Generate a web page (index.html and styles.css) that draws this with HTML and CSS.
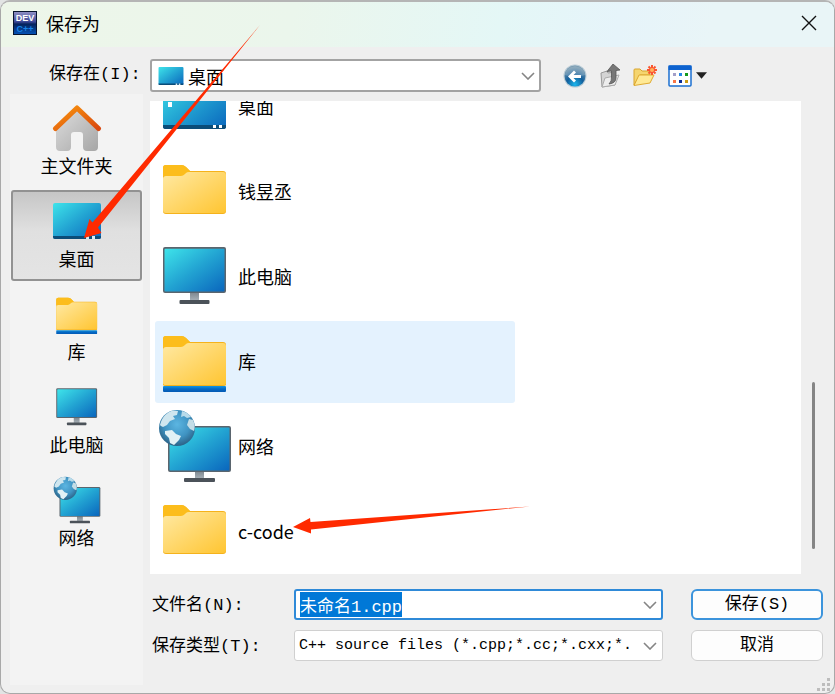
FILE: index.html
```html
<!DOCTYPE html>
<html lang="zh-CN">
<head>
  <meta charset="UTF-8">
  <meta name="viewport" content="width=device-width, initial-scale=1.0">
  <title>保存为</title>
  <link rel="stylesheet" href="styles.css">
</head>
<body>
  <!-- Shared icons -->
  <svg class="defs" aria-hidden="true">
    <defs>
      <linearGradient id="screen" x1="0" y1="0" x2="1" y2="1">
        <stop offset="0" stop-color="#3ee4ea"/>
        <stop offset="0.5" stop-color="#22a3d2"/>
        <stop offset="1" stop-color="#0a66bd"/>
      </linearGradient>
      <linearGradient id="paper" x1="0" y1="0" x2="1" y2="1">
        <stop offset="0" stop-color="#ffe9a3"/>
        <stop offset="1" stop-color="#ffc531"/>
      </linearGradient>
      <linearGradient id="base" x1="0" y1="0" x2="0" y2="1">
        <stop offset="0" stop-color="#1496e0"/>
        <stop offset="0.5" stop-color="#0568c4"/>
        <stop offset="1" stop-color="#035ab4"/>
      </linearGradient>
      <linearGradient id="stand" x1="0" y1="0" x2="0" y2="1">
        <stop offset="0" stop-color="#7c868e"/>
        <stop offset="1" stop-color="#a9b2b9"/>
      </linearGradient>
      <linearGradient id="wall" x1="0" y1="0" x2="1" y2="1">
        <stop offset="0" stop-color="#dedede"/>
        <stop offset="1" stop-color="#a6a6a6"/>
      </linearGradient>
      <linearGradient id="roof" x1="0" y1="0" x2="1" y2="1">
        <stop offset="0" stop-color="#f9950d"/>
        <stop offset="1" stop-color="#d9480f"/>
      </linearGradient>
      <radialGradient id="ocean" cx="0.5" cy="0.4" r="0.6">
        <stop offset="0" stop-color="#5cb6e2"/>
        <stop offset="0.6" stop-color="#3f93c2"/>
        <stop offset="1" stop-color="#2c6286"/>
      </radialGradient>
      <radialGradient id="ball" cx="0.5" cy="0.9" r="0.8">
        <stop offset="0" stop-color="#1ab6ee"/>
        <stop offset="0.5" stop-color="#135f9c"/>
        <stop offset="1" stop-color="#6f94ac"/>
      </radialGradient>
      <linearGradient id="dev" x1="0" y1="0" x2="0" y2="1">
        <stop offset="0" stop-color="#8e8fc4"/>
        <stop offset="0.45" stop-color="#3b4795"/>
        <stop offset="0.55" stop-color="#04235c"/>
        <stop offset="1" stop-color="#0551b4"/>
      </linearGradient>
    </defs>
    <symbol id="i-folder" viewBox="0 0 74 74">
      <path d="M5 14q0-3 3-3h15q3 0 5 2l4 4H65q3 0 3 3V57q0 3-3 3H8q-3 0-3-3z" fill="#f5b21b"/>
      <path d="M5 14q0-3 3-3h15q3 0 5 2l4 4-4 5H5z" fill="#fcbd1c"/>
      <path d="M5 25q0-3 3-3h15q2 0 4-2l1-1q1-1 3-1H65q3 0 3 3V56q0 3-3 3H8q-3 0-3-3z" fill="url(#paper)"/>
    </symbol>
    <symbol id="i-library" viewBox="0 0 74 74">
      <path d="M5 15q0-3 3-3h15q3 0 5 2l4 4H65q3 0 3 3V61q0 1-3 1H8q-3 0-3-1z" fill="#f5b21b"/>
      <path d="M5 15q0-3 3-3h15q3 0 5 2l4 4-4 5H5z" fill="#fcbd1c"/>
      <path d="M5 26q0-3 3-3h15q2 0 4-2l1-1q1-1 3-1H65q3 0 3 3V59q0 2-3 2H8q-3 0-3-2z" fill="url(#paper)"/>
      <rect x="5" y="62" width="63" height="6" rx="1" fill="url(#base)"/>
    </symbol>
    <symbol id="i-pc" viewBox="0 0 74 74">
      <path d="M32 53h9v9h-9z" fill="url(#stand)"/>
      <rect x="21.500" y="61" width="30" height="4" rx="1" fill="#4b5259"/>
      <rect x="5" y="8" width="63" height="46" rx="2" fill="#5a656e"/>
      <rect x="6.500" y="9.800" width="60" height="42.700" rx="1" fill="url(#screen)"/>
    </symbol>
    <symbol id="i-network" viewBox="0 0 74 74">
      <path d="M37 62h9v8h-9z" fill="url(#stand)"/>
      <rect x="26" y="69" width="31" height="4" rx="1" fill="#4b5259"/>
      <rect x="10" y="17" width="63" height="46" rx="2" fill="#5a656e"/>
      <rect x="11.500" y="18.500" width="60" height="43" rx="1" fill="url(#screen)"/>
      <circle cx="19" cy="19" r="18" fill="url(#ocean)"/>
      <path d="M2 16C4 8 9 3 15 1.500l5 .500-1 4-4 1 2 3-5 2-3 4-4 2-2-1z" fill="#cfe6ef"/>
      <path d="M24 2c4 1 7 3 9 6l-4 1-3-2-3 1z" fill="#b8dbea"/>
      <path d="M31 10l4 1c2 4 2 8 1 11l-4-2-3-4z" fill="#c4dde6"/>
      <path d="M7 22l7-1 4 4 5 2-2 4-5 5-4-2-1-5-4-4z" fill="#e2f1f5"/>
    </symbol>
    <symbol id="i-desktop" viewBox="0 0 74 74">
      <rect x="5" y="8" width="63" height="52" rx="3" fill="url(#screen)"/>
      <path d="M5 56h63v2q0 2-3 2H8q-3 0-3-2z" fill="#0b4c78"/>
      <path d="M10 33h4v5h-4zM55 56h3v3h-3zM61 56h3v3h-3z" fill="#fff"/>
    </symbol>
    <symbol id="i-desktop-flat" viewBox="0 0 50 36">
      <rect x="1" y="0" width="48" height="36" rx="2" fill="url(#screen)"/>
      <path d="M1 33h48v1q0 2-2 2H3q-2 0-2-2z" fill="#0b4c78"/>
      <path d="M34 33h3v3h-3zM40 33h3v3h-3z" fill="#d9edf7"/>
    </symbol>
    <symbol id="i-home" viewBox="0 0 48 48">
      <path d="M24 5L3 25v18q0 4 4 4h7q4 0 4-4V31q0-3 3-3h6q3 0 3 3v12q0 4 4 4h7q4 0 4-4V25z" fill="url(#wall)"/>
      <path d="M2.500 24.500L24 4l21.500 20.500" fill="none" stroke="url(#roof)" stroke-width="5" stroke-linecap="round" stroke-linejoin="round"/>
    </symbol>
    <symbol id="i-chevron" viewBox="0 0 14 8">
      <path d="M1 1l6 6 6-6" fill="none" stroke="#858585" stroke-width="1.600"/>
    </symbol>
  </svg>

  <div class="dialog" role="dialog" aria-labelledby="title">
    <header class="titlebar">
      <svg class="app-icon" viewBox="0 0 24 24" aria-hidden="true">
        <rect width="24" height="24" fill="#07142f"/>
        <rect x="1" y="1" width="22" height="22" fill="url(#dev)"/>
        <text x="12" y="10" class="logo-top">DEV</text>
        <text x="12" y="21" class="logo-bottom">C++</text>
      </svg>
      <h1 id="title">保存为</h1>
      <button class="close" type="button" aria-label="关闭">
        <svg viewBox="0 0 16 16"><path d="M1 1l14 14M15 1L1 15" stroke="#111" stroke-width="1.400"/></svg>
      </button>
    </header>

    <div class="toolbar">
      <label for="location">保存在(I):</label>
      <div class="combo location">
        <svg class="combo-icon" viewBox="0 0 50 36" preserveAspectRatio="none"><use href="#i-desktop-flat"/></svg>
        <select id="location">
          <option>桌面</option>
        </select>
        <svg class="chevron"><use href="#i-chevron"/></svg>
      </div>
      <div class="tools">
        <button type="button" aria-label="后退">
          <svg viewBox="0 0 24 24">
            <circle cx="12" cy="12" r="11.500" fill="#b9cbd6"/>
            <circle cx="12" cy="12" r="10.500" fill="url(#ball)"/>
            <path d="M2 11a10 9 0 0 1 20 0q-10 4-20 0z" fill="#fff" opacity=".2"/>
            <path d="M5 12.500l6-6 2 2-2.500 2.500H18v3h-7.500l2.500 2.500-2 2z" fill="#fff"/>
          </svg>
        </button>
        <button type="button" aria-label="向上">
          <svg viewBox="0 0 24 24">
            <path d="M3 9l6-2 1 2 7-1v13L4 23z" fill="#d4d4d4" stroke="#9a9a9a"/>
            <path d="M4 23l3-9 14-3-4 10z" fill="#ededed" stroke="#ababab"/>
            <path d="M15 0l7 6-4 .500V14q0 5-7 6 3-3 2.500-7V7L9 7.500z" fill="#777" stroke="#555" stroke-width=".8"/>
          </svg>
        </button>
        <button type="button" aria-label="新建文件夹">
          <svg viewBox="0 0 24 24">
            <path d="M1 21V6q0-1 1-1h5l2 2h8v4H7z" fill="#f5d56f" stroke="#d9a52e"/>
            <path d="M1 21.500L6 11h15l-4 8z" fill="#ffe995" stroke="#dfaa32"/>
            <path d="M19 1v10M14 6h10M15.500 2.500l7 7M22.500 2.500l-7 7" stroke="#fa5630" stroke-width="2"/>
            <circle cx="19" cy="6" r="2" fill="#ffb25b"/>
          </svg>
        </button>
        <button class="views" type="button" aria-label="视图">
          <svg viewBox="0 0 24 24">
            <rect x="1" y="2" width="22" height="20" rx="1" fill="#fff" stroke="#1b6fd0" stroke-width="1.500"/>
            <path d="M.500 1.500h23V6H.500z" fill="#0d62cf"/>
            <path d="M5 9h3v3H5z" fill="#a39fc8"/>
            <path d="M11 9h3v3h-3z" fill="#2786e4"/>
            <path d="M17 9h3v3h-3z" fill="#159a1c"/>
            <path d="M5 16h3v3H5z" fill="#fa7546"/>
            <path d="M11 16h3v3h-3z" fill="#0c2c96"/>
            <path d="M17 16h3v3h-3z" fill="#c99b12"/>
          </svg>
          <svg class="caret" viewBox="0 0 12 7"><path d="M0 0h12L6 7z" fill="#222"/></svg>
        </button>
      </div>
    </div>

    <div class="content">
      <nav class="places" aria-label="位置">
        <button type="button"><svg><use href="#i-home"/></svg>主文件夹</button>
        <button type="button" class="active"><svg><use href="#i-desktop-flat"/></svg>桌面</button>
        <button type="button"><svg><use href="#i-library"/></svg>库</button>
        <button type="button"><svg><use href="#i-pc"/></svg>此电脑</button>
        <button type="button"><svg><use href="#i-network"/></svg>网络</button>
      </nav>

      <main class="main">
        <div class="browser">
          <ul class="files">
            <li><svg><use href="#i-desktop"/></svg>桌面</li>
            <li><svg><use href="#i-folder"/></svg>钱昱丞</li>
            <li><svg><use href="#i-pc"/></svg>此电脑</li>
            <li class="hover"><svg><use href="#i-library"/></svg>库</li>
            <li><svg><use href="#i-network"/></svg>网络</li>
            <li><svg><use href="#i-folder"/></svg>c-code</li>
          </ul>
          <div class="scrollbar"><div class="thumb"></div></div>
        </div>

        <form class="save-form">
          <label for="filename">文件名(N):</label>
          <div class="combo filename">
            <input type="text" id="filename" value="未命名1.cpp" autocomplete="off" spellcheck="false">
            <svg class="chevron"><use href="#i-chevron"/></svg>
          </div>
          <button class="primary" type="submit">保存(S)</button>

          <label for="filetype">保存类型(T):</label>
          <div class="combo filetype">
            <select id="filetype">
              <option>C++ source files (*.cpp;*.cc;*.cxx;*.</option>
            </select>
            <svg class="chevron"><use href="#i-chevron"/></svg>
          </div>
          <button type="button">取消</button>
        </form>
      </main>
    </div>

    <svg class="grip" viewBox="0 0 13 13" aria-hidden="true">
      <path d="M10 0h3v3h-3zM5 5h3v3H5zM10 5h3v3h-3zM0 10h3v3H0zM5 10h3v3H5zM10 10h3v3h-3z" fill="#bdbdbd"/>
    </svg>
  </div>

  <!-- Red pointer arrows drawn over the dialog -->
  <svg class="arrows" viewBox="0 0 835 694" aria-hidden="true">
    <path d="M260 25L98 227.500l3.500 5.500L84 238l5.500-19 3 3.500z" fill="#ff2a00"/>
    <path d="M530 506.500L311 529.500v4L293 527l17-9 .500 4z" fill="#ff2a00"/>
  </svg>

  <script>
    // The suggested name starts out selected so typing replaces it
    const filename = document.getElementById('filename');
    filename.focus();
    filename.select();
  </script>
</body>
</html>
```
FILE: styles.css
```css
* {
  margin: 0;
  padding: 0;
  box-sizing: border-box;
}
body {
  font-family: "Noto Sans CJK SC", sans-serif;
  font-size: 18px;
  color: #000;
  background-color: #e2e4e4;
}
button, input, select {
  font: inherit;
  color: inherit;
}
button {
  border: none;
  background: none;
}
.defs {
  position: absolute;
  width: 0;
  height: 0;
}

.dialog {
  position: relative;
  display: flex;
  flex-direction: column;
  min-height: 100vh;
  background-color: #efefef;
  border: 1px solid #a8a8a8;
  border-top: 2px solid #b5b5b5;
  border-radius: 10px;
  overflow: hidden;
}

/* Title bar */
.titlebar {
  display: flex;
  align-items: center;
  gap: 9px;
  height: 45px;
  padding: 0 17px 3px 12px;
  background: linear-gradient(100deg, #edf6e9 0%, #ebf6ec 35%, #e4f7f6 60%, #e6f4fa 74%, #e9f5f7 85%);
}
.titlebar h1 {
  flex: 1;
  font-size: 18px;
  font-weight: 400;
  line-height: 24px;
}
.app-icon {
  width: 24px;
  height: 24px;
}
.logo-top, .logo-bottom {
  font-family: "Liberation Sans", sans-serif;
  font-size: 9px;
  font-weight: 700;
  text-anchor: middle;
  fill: #fff;
}
.logo-bottom {
  fill: #1683e8;
}
.close {
  width: 16px;
  height: 16px;
}
.close svg {
  display: block;
}

/* Location row */
.toolbar {
  display: grid;
  grid-template-columns: 92px minmax(0, 1fr) 284px;
  column-gap: 9px;
  padding: 12px 0 2px 48px;
}
.toolbar label, .save-form {
  font-family: "Liberation Mono", "Noto Sans CJK SC", monospace;
  font-size: 17px;
}
.toolbar label {
  line-height: 31px;
}
.tools {
  display: flex;
  align-items: center;
  gap: 11px;
  padding-left: 13px;
}
.tools button {
  display: flex;
  align-items: center;
  gap: 4px;
}
.tools svg {
  width: 24px;
  height: 24px;
}
.tools .caret {
  width: 11px;
  height: 7px;
}

/* Combo boxes */
.combo {
  position: relative;
  display: flex;
  align-items: center;
}
.combo select, .combo input {
  flex: 1;
  min-width: 0;
  height: 100%;
  padding: 0 30px 0 4px;
  background-color: #fff;
  border: 1px solid #d0d0d0;
  border-radius: 3px;
  outline: none;
  appearance: none;
}
.combo .chevron {
  position: absolute;
  right: 6px;
  width: 14px;
  height: 8px;
  pointer-events: none;
}
.location {
  height: 33px;
}
.location select {
  border: 2px solid #a3a3a3;
  padding-left: 36px;
}
.combo-icon {
  position: absolute;
  left: 8px;
  width: 26px;
  height: 18px;
}

/* Places bar and file list */
.content {
  flex: 1;
  display: grid;
  grid-template-columns: 133px minmax(0, 1fr);
  column-gap: 7px;
  padding: 0 11px 8px 9px;
}
.places {
  display: flex;
  flex-direction: column;
  gap: 2px;
  padding: 3px 1px;
  background-color: #f3f3f3;
}
.places button {
  display: flex;
  flex-direction: column;
  align-items: center;
  height: 91px;
  padding-top: 7px;
  line-height: 27px;
}
.places svg {
  width: 50px;
  height: 48px;
}
.places .active {
  padding-top: 5px;
  background: linear-gradient(#c6c6c6, #e0e0e0 45%, #e4e4e4);
  border: 2px solid #929292;
  border-radius: 3px;
}
.main {
  display: flex;
  flex-direction: column;
  padding: 7px 0 24px;
}
.browser {
  flex: 1;
  display: flex;
  min-height: 0;
}
.files {
  flex: 1;
  display: flex;
  flex-direction: column;
  justify-content: flex-end;
  gap: 3px;
  height: 473px;
  padding: 0 0 1px 5px;
  background-color: #fff;
  list-style: none;
  overflow: hidden;
}
.files li {
  flex: none;
  display: flex;
  align-items: center;
  gap: 6px;
  width: 360px;
  height: 82px;
  padding-left: 3px;
  border-radius: 3px;
}
.files svg {
  width: 74px;
  height: 74px;
}
.files .hover {
  background-color: #e4f2fe;
}
.scrollbar {
  display: grid;
  grid-template-rows: 281fr 167fr 25fr;
  width: 22px;
  padding-left: 11px;
}
.thumb {
  grid-row: 2;
  width: 3px;
  border-radius: 2px;
  background-color: #858585;
}
.files li {
  line-height: 24px;
  padding-bottom: 3px;
}

/* File name and type */
.save-form {
  display: grid;
  grid-template-columns: 142px minmax(0, 1fr) 132px;
  grid-template-rows: 31px 31px;
  row-gap: 10px;
  margin-top: 15px;
  padding-left: 2px;
}
.save-form label {
  line-height: 33px;
}
.save-form .combo {
  margin-right: 28px;
}
.save-form button {
  background-color: #fdfdfd;
  border: 1px solid #d0d0d0;
  border-radius: 6px;
  line-height: 24px;
}
.save-form .primary {
  border: 2px solid #3c94dc;
}
.filename input {
  border: 2px solid #2f8ad8;
  line-height: 20px;
}
.filename input::selection {
  background-color: #0078d7;
  color: #fff;
}
.filetype select {
  font-size: 15px;
}

.grip {
  position: absolute;
  right: 4px;
  bottom: 2px;
  width: 13px;
  height: 13px;
}
.arrows {
  position: absolute;
  top: 0;
  left: 0;
  width: 835px;
  height: 694px;
  pointer-events: none;
}
```
